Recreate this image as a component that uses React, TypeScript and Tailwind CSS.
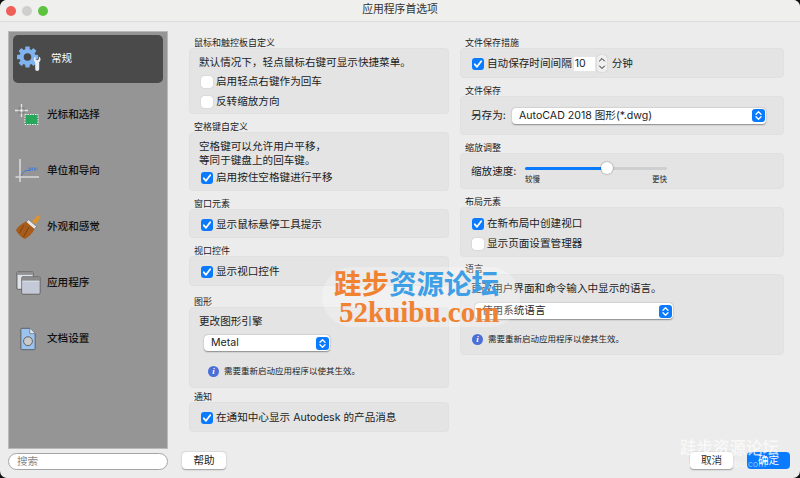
function Check({ on = true }: { on?: boolean }) {
  if (!on) {
    return <div className="w-[12px] h-[12px] rounded-[3px] bg-white shadow-[0_0_1px_rgba(0,0,0,0.35)] shrink-0" />;
  }
  return (
    <div className="w-[12px] h-[12px] rounded-[3px] bg-[#0a7aff] flex items-center justify-center shrink-0">
      <svg viewBox="0 0 12 12" className="w-[12px] h-[12px]" fill="none">
        <path d="M2.8 6.3 L5 8.8 L9.2 3.2" stroke="#fff" strokeWidth="1.8" strokeLinecap="round" strokeLinejoin="round" />
      </svg>
    </div>
  );
}

function CheckRow({ on, label, className = '' }: { on?: boolean; label: string; className?: string }) {
  return (
    <div className={`flex items-center gap-[3px] h-[14px] pl-[11px] text-[10.6px] ${className}`}>
      <Check on={on} />
      <span>{label}</span>
    </div>
  );
}

function Arrows() {
  return (
    <div className="w-[13px] h-[13px] rounded-[3px] bg-[#0a7aff] flex items-center justify-center shrink-0">
      <svg viewBox="0 0 13 13" className="w-[13px] h-[13px]" fill="none">
        <path d="M4 5.2 L6.5 2.8 L9 5.2 M4 7.8 L6.5 10.2 L9 7.8" stroke="#fff" strokeWidth="1.3" strokeLinecap="round" strokeLinejoin="round" />
      </svg>
    </div>
  );
}

function SelectBox({ label, className }: { label: string; className: string }) {
  return (
    <div className={`h-[16px] bg-white rounded-[4px] shadow-[0_0.5px_1.5px_rgba(0,0,0,0.4)] flex items-center justify-between pl-[7px] pr-[1.5px] text-[10.6px] ${className}`}>
      <span>{label}</span>
      <Arrows />
    </div>
  );
}

function Info({ className = '' }: { className?: string }) {
  return (
    <div className={`flex items-center gap-[5px] text-[8.5px] ${className}`}>
      <div className="w-[11px] h-[11px] rounded-full bg-[#4a6fd8] flex items-center justify-center text-white text-[9px] italic font-bold" style={{ fontFamily: '"Liberation Serif", serif' }}>
        i
      </div>
      <span>需要重新启动应用程序以使其生效。</span>
    </div>
  );
}

function Section({ title, className, cardClass, children }: { title: string; className?: string; cardClass: string; children: React.ReactNode }) {
  return (
    <div className={className}>
      <div className="h-[12px] leading-[15px] text-[9px] text-[#222] pl-[5px]">{title}</div>
      <div className={`mt-[1px] rounded-[4px] bg-[#e4e4e4] border border-[#e0e0e0] ${cardClass}`}>{children}</div>
    </div>
  );
}

function GearIcon() {
  return (
    <svg viewBox="0 0 26 26" className="w-[26px] h-[26px]">
      <g fill="#80b2ee">
        <circle cx="10.5" cy="11" r="8" />
        {[0, 45, 90, 135, 180, 225, 270, 315].map((a) => (
          <rect key={a} x="8.3" y="0.4" width="4.4" height="4.4" rx="0.8" transform={`rotate(${a} 10.5 11)`} />
        ))}
      </g>
      <circle cx="10.5" cy="11" r="3.8" fill="#454545" />
      <path d="M18.6 10.5 v2.8 l1.6 1 1.6 -1 v-2.8 c2.2 1 2.4 4.4 0.4 5.4 v7.2 a2 2 0 0 1 -4 0 v-7.2 c-2 -1 -1.8 -4.4 0.4 -5.4z" fill="#e8eef6" />
    </svg>
  );
}

function SelectIcon() {
  return (
    <svg viewBox="0 0 26 26" className="w-[26px] h-[26px]">
      <path d="M0 8.5 H13 M6.5 2 V15" stroke="#e6e6e6" strokeWidth="1.3" />
      <rect x="4" y="6" width="5" height="5" fill="none" stroke="#777" strokeWidth="0.7" />
      <rect x="10" y="12.5" width="13" height="10" fill="#27a65c" stroke="#fff" strokeWidth="0.9" strokeDasharray="1.5 1" />
    </svg>
  );
}

function AxisIcon() {
  return (
    <svg viewBox="0 0 26 26" className="w-[26px] h-[26px]">
      <path d="M5 1 V24 M0.5 19 H24" stroke="#d8d8d8" strokeWidth="1.6" />
      <path d="M6 18 Q8.5 12 13 12.5 H16" stroke="#3f78d8" strokeWidth="1" fill="none" />
      <path d="M13.5 11 H22.5" stroke="#4f80d0" strokeWidth="3" strokeDasharray="2 0.8" />
    </svg>
  );
}

function BrushIcon() {
  return (
    <svg viewBox="0 0 26 26" className="w-[26px] h-[26px]">
      <path d="M17 7.5 L23 1 L25.5 3 L20.5 10.5 Z" fill="#e0932b" />
      <path d="M13.5 5.5 L21.5 12.5 L19 15.5 L11 8.5 Z" fill="#e8e8e8" stroke="#555" strokeWidth="0.5" />
      <path d="M11 7.5 C6.5 9.5 3 12.5 1 16 C2 19 6 23.5 10 25 C13.5 23 17.5 19.5 19.5 15 Z" fill="#a85c1c" />
      <path d="M9 11 C7 14 5.5 17 4.5 19 M14 13 C12 16 10 20 8.5 23" stroke="#6d380e" strokeWidth="0.8" fill="none" />
    </svg>
  );
}

function WindowsIcon() {
  return (
    <svg viewBox="0 0 26 26" className="w-[25px] h-[25px]">
      <rect x="1" y="1" width="17" height="18" rx="1" fill="#dfe3ea" stroke="#555" strokeWidth="0.9" />
      <rect x="1" y="1" width="17" height="3" fill="#8f8f8f" />
      <rect x="6" y="6" width="19" height="18" rx="1" fill="#dfe3ea" stroke="#555" strokeWidth="0.9" />
      <rect x="6" y="6" width="19" height="4" fill="#8a8a8a" />
      <rect x="7" y="11" width="17" height="12" fill="#c3c9d6" />
    </svg>
  );
}

function DocIcon() {
  return (
    <svg viewBox="0 0 18 26" className="w-[16px] h-[24px]">
      <path d="M2 1 H11 L17 7 V24 a1 1 0 0 1 -1 1 H2 a1 1 0 0 1 -1 -1 V2 a1 1 0 0 1 1 -1z" fill="#9cc2ee" stroke="#444" strokeWidth="0.8" />
      <path d="M11 1 V7 H17" fill="#dbe8f7" stroke="#444" strokeWidth="0.6" />
      <circle cx="9" cy="15.5" r="5" fill="#c9c9c9" stroke="#555" strokeWidth="1" />
    </svg>
  );
}

const sideItems = [
  { label: '光标和选择', icon: <SelectIcon /> },
  { label: '单位和导向', icon: <AxisIcon /> },
  { label: '外观和感觉', icon: <BrushIcon /> },
  { label: '应用程序', icon: <WindowsIcon /> },
  { label: '文档设置', icon: <DocIcon /> },
];

export default function App() {
  return (
    <div
      className="relative w-[800px] h-[478px] overflow-hidden bg-[#111] text-[#1c1c1c]"
      style={{ fontFamily: 'Inter, "Noto Sans CJK SC", sans-serif' }}
    >
      <div className="h-full flex flex-col rounded-[7px] bg-[#ececec] overflow-hidden">
        {/* Title bar */}
        <div className="relative h-[22px] bg-[#efefed] border-b border-[#dcdcdc] flex items-center justify-center text-[10.8px] text-[#333] shrink-0">
          <div className="absolute left-[6px] top-[6px] flex gap-[6px]">
            <div className="w-[10px] h-[10px] rounded-full bg-[#ef5f57]" />
            <div className="w-[10px] h-[10px] rounded-full bg-[#cfcfcd]" />
            <div className="w-[10px] h-[10px] rounded-full bg-[#5cc23f]" />
          </div>
          应用程序首选项
        </div>

        <div className="flex-1 flex min-h-0">
          {/* Sidebar */}
          <div className="w-[189px] pl-[8px] pt-[9px] shrink-0">
            <div className="w-[160px] h-[418px] bg-[#959595] border border-[#b9b9b9] px-[4px] pt-[3px]">
              <div className="h-[48px] rounded-[5px] bg-[#4a4a4a] flex items-center pl-[4px] text-white text-[10.6px] mb-[8px]">
                <GearIcon />
                <span className="ml-[8px]">常规</span>
              </div>
              {sideItems.map((it) => (
                <div key={it.label} className="h-[48px] mb-[8px] flex items-center text-[10.6px] font-medium text-[#111]">
                  <div className="w-[30px] flex justify-center shrink-0">{it.icon}</div>
                  <span className="ml-[4px]">{it.label}</span>
                </div>
              ))}
            </div>
            <div className="mt-[4px] w-[160px] h-[17px] rounded-full bg-white border border-[#a5a5a5] pl-[8px] text-[10.6px] leading-[15px] text-[#8a8a8a]">
              搜索
            </div>
          </div>

          {/* Left column */}
          <div className="w-[260px] pt-[13px] shrink-0">
            <Section title="鼠标和触控板自定义" cardClass="h-[66px] pt-[6px]">
              <div className="pl-[9px] text-[10.6px] h-[15px] leading-[15px]">默认情况下，轻点鼠标右键可显示快捷菜单。</div>
              <CheckRow on={false} label="启用轻点右键作为回车" className="mt-[5px]" />
              <CheckRow on={false} label="反转缩放方向" className="mt-[6px]" />
            </Section>
            <Section title="空格键自定义" className="mt-[5px]" cardClass="h-[59px] pt-[7px]">
              <div className="pl-[9px] text-[10.6px] leading-[14px]">
                空格键可以允许用户平移，
                <br />
                等同于键盘上的回车键。
              </div>
              <CheckRow label="启用按住空格键进行平移" className="mt-[3px]" />
            </Section>
            <Section title="窗口元素" className="mt-[5px]" cardClass="h-[29px] pt-[8px]">
              <CheckRow label="显示鼠标悬停工具提示" />
            </Section>
            <Section title="视口控件" className="mt-[5px]" cardClass="h-[30px] pt-[8px]">
              <CheckRow label="显示视口控件" />
            </Section>
            <Section title="图形" className="mt-[8px]" cardClass="h-[81px] pt-[6px]">
              <div className="pl-[9px] text-[10.6px] h-[15px] leading-[15px]">更改图形引擎</div>
              <SelectBox label="Metal" className="ml-[14px] mt-[6px] w-[126px]" />
              <Info className="ml-[18px] mt-[14px]" />
            </Section>
            <Section title="通知" className="mt-[1px]" cardClass="h-[30px] pt-[8px]">
              <CheckRow label="在通知中心显示 Autodesk 的产品消息" />
            </Section>
          </div>

          {/* Right column */}
          <div className="ml-[11px] w-[324px] pt-[13px] shrink-0">
            <Section title="文件保存措施" cardClass="h-[30px] flex items-center pt-[1px]">
              <CheckRow label="自动保存时间间隔" />
              <div className="ml-[2px] w-[21px] h-[14px] bg-white text-[10.6px] leading-[14px] pl-[1px]">10</div>
              <div className="ml-[2px] w-[10px] h-[17px] rounded-[3px] bg-[#efefef] shadow-[0_0_1px_rgba(0,0,0,0.3)] flex items-center justify-center">
                <svg viewBox="0 0 10 17" className="w-[10px] h-[17px]" fill="none">
                  <path d="M2.5 6 L5 3.5 L7.5 6 M2.5 11 L5 13.5 L7.5 11" stroke="#222" strokeWidth="1" strokeLinecap="round" strokeLinejoin="round" />
                </svg>
              </div>
              <span className="ml-[5px] text-[10.6px]">分钟</span>
            </Section>
            <Section title="文件保存" className="mt-[5px]" cardClass="h-[39px] flex items-center pl-[10px]">
              <span className="text-[10.6px] w-[41px]">另存为:</span>
              <SelectBox label="AutoCAD 2018 图形(*.dwg)" className="w-[254px]" />
            </Section>
            <Section title="缩放调整" className="mt-[5px]" cardClass="h-[36px] flex pl-[10px] pt-[10px]">
              <span className="text-[10.6px] leading-[15px] w-[54px] shrink-0">缩放速度:</span>
              <div className="w-[142px]">
                <div className="relative h-[3px] mt-[3px] rounded-full bg-[#cfcfcf]">
                  <div className="h-full w-[82px] rounded-full bg-[#0a7aff]" />
                  <div className="absolute left-[76px] top-[-5px] w-[12px] h-[12px] rounded-full bg-white shadow-[0_0_2px_rgba(0,0,0,0.45)]" />
                </div>
                <div className="flex justify-between mt-[5px] text-[7.5px] leading-[10px]">
                  <span>较慢</span>
                  <span>更快</span>
                </div>
              </div>
            </Section>
            <Section title="布局元素" className="mt-[5px]" cardClass="h-[50px] pt-[9px]">
              <CheckRow label="在新布局中创建视口" />
              <CheckRow on={false} label="显示页面设置管理器" className="mt-[6px]" />
            </Section>
            <Section title="语言" className="mt-[4px]" cardClass="h-[81px] pt-[6px]">
              <div className="pl-[10px] text-[10.6px] h-[15px] leading-[15px]">更改用户界面和命令输入中显示的语言。</div>
              <SelectBox label="使用系统语言" className="ml-[14px] mt-[7px] w-[198px]" />
              <Info className="ml-[11px] mt-[14px]" />
            </Section>
          </div>
        </div>

        {/* Footer buttons */}
        <div className="h-[26px] shrink-0 flex pl-[182px] pr-[10px] text-[10.6px]">
          <div className="w-[44px] h-[17px] bg-white rounded-[4px] shadow-[0_0.5px_1.5px_rgba(0,0,0,0.35)] flex items-center justify-center">帮助</div>
          <div className="ml-auto w-[43px] h-[17px] bg-white rounded-[4px] shadow-[0_0.5px_1.5px_rgba(0,0,0,0.35)] flex items-center justify-center">取消</div>
          <div className="ml-[14px] w-[43px] h-[17px] bg-[#0a7aff] text-white rounded-[4px] flex items-center justify-center">确定</div>
        </div>
      </div>

      {/* Watermark */}
      <div
        className="absolute left-[322px] top-[267px] w-[198px] h-[60px] rounded-[30px] bg-white/25 font-bold"
        style={{ fontFamily: '"Noto Sans CJK SC", serif' }}
      >
        <div className="pl-[12px] text-[27.5px] leading-[32px] mt-[-1px] whitespace-nowrap">
          <span className="text-[#f08232]">跬步</span>
          <span className="text-[#3f9fe6]">资源论坛</span>
        </div>
      </div>
      <div
        className="absolute left-[339px] top-[296px] text-[29px] leading-[32px] font-bold text-[#f08232] whitespace-nowrap"
        style={{ fontFamily: '"Liberation Serif", serif' }}
      >
        52kuibu.com
      </div>
      <div className="absolute left-[680px] top-[438px] text-[16.5px] leading-[20px] text-white/70 whitespace-nowrap font-medium">跬步资源论坛</div>
      <div className="absolute left-[687px] top-[458px] text-[9px] leading-[12px] text-white/50 whitespace-nowrap">www.52kuibu.com</div>
    </div>
  );
}
